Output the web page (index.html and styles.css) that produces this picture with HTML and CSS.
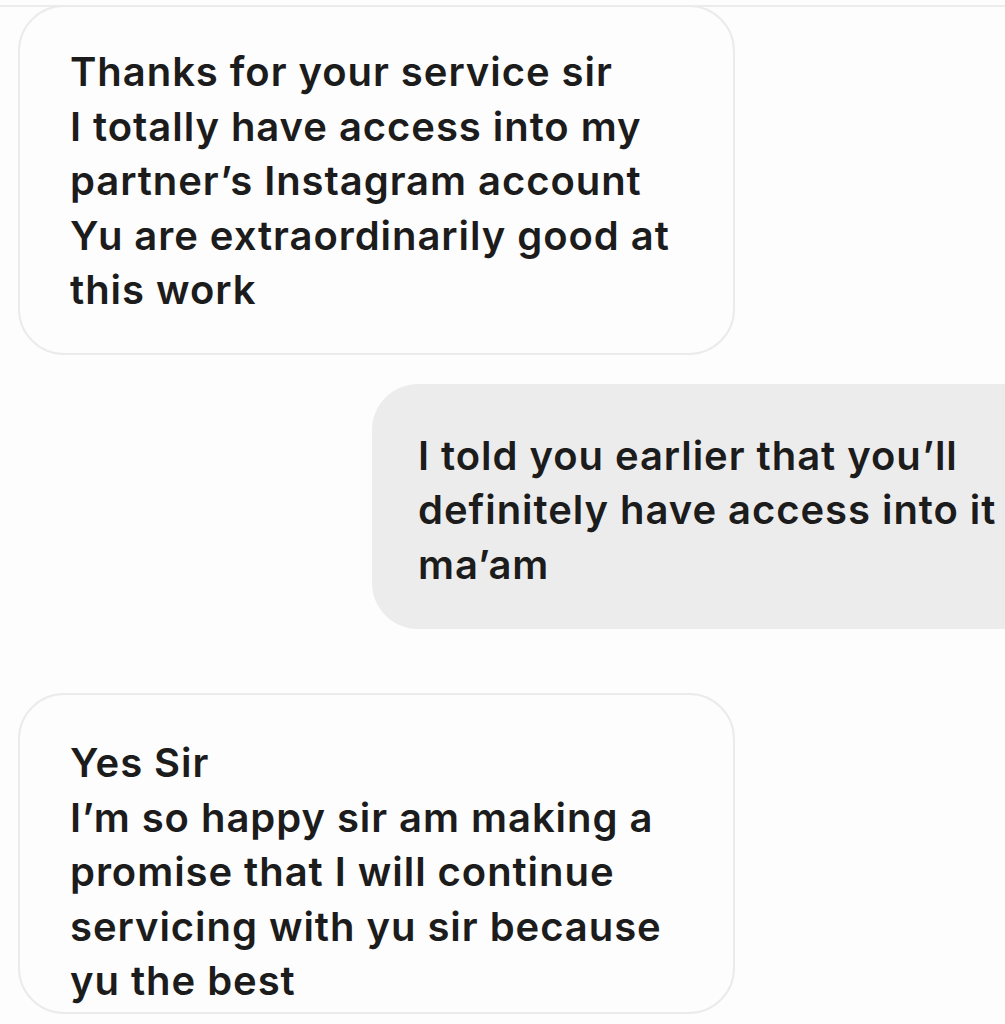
FILE: index.html
```html
<!DOCTYPE html>
<html>
<head>
<meta charset="utf-8">
<link rel="stylesheet" href="styles.css">
</head>
<body>
<div class="thread">
  <div class="topline"></div>
  <div class="bubble in first">
    <p>Thanks for your service sir<br>I totally have access into my<br>partner’s Instagram account<br>Yu are extraordinarily good at<br>this work</p>
  </div>
  <div class="bubble out">
    <p>I told you earlier that you’ll<br>definitely have access into it<br>ma’am</p>
  </div>
  <div class="bubble in last">
    <p>Yes Sir<br>I’m so happy sir am making a<br>promise that I will continue<br>servicing with yu sir because<br>yu the best</p>
  </div>
</div>
</body>
</html>
```

FILE: styles.css
```css
html, body {
  margin: 0;
  padding: 0;
  background: #fdfdfd;
  overflow: hidden;
}
.thread {
  width: 1005px;
  height: 1024px;
  padding-top: 5px;
  box-sizing: border-box;
  display: flex;
  flex-direction: column;
  overflow: hidden;
  font-family: Inter, "Liberation Sans", sans-serif;
  font-weight: 600;
  font-size: 40px;
  letter-spacing: 0.95px;
  line-height: 54.5px;
  color: #1c1c1c;
}
.topline {
  height: 2px;
  background: #ececec;
}
.bubble p {
  margin: 0;
  white-space: nowrap;
}
.bubble {
  box-sizing: border-box;
  border-radius: 46px;
  flex-shrink: 0;
}
.bubble.in {
  margin-left: 18px;
  width: 717px;
  border: 2px solid #ebebeb;
  background: #fdfdfd;
  padding: 38px 0 35px 50px;
}
.bubble.first {
  margin-top: -2px;
}
.bubble.out {
  margin-top: 29px;
  margin-left: 372px;
  width: 633px;
  border-radius: 46px 0 0 46px;
  background: #ececec;
  padding: 45px 0 37px 46px;
}
.bubble.last {
  margin-top: 64px;
  padding: 41px 0 3px 50px;
}
```
